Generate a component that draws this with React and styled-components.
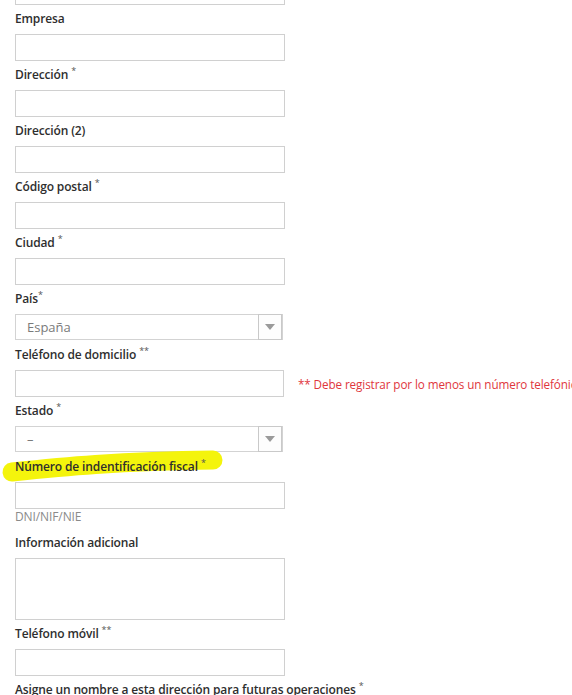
import React from 'react';
import styled, { createGlobalStyle } from 'styled-components';

const GlobalStyle = createGlobalStyle`
  body {
    margin: 0;
    background: #fff;
    font-family: "Open Sans", "Liberation Sans", sans-serif;
    overflow: hidden;
  }
`;

const fields = [
  { label: 'Apellidos', req: '*' },
  { label: 'Empresa' },
  { label: 'Dirección', req: '*' },
  { label: 'Dirección (2)' },
  { label: 'Código postal', req: '*' },
  { label: 'Ciudad', req: '*' },
  { label: 'País', req: '*', tight: true, select: 'España' },
  { label: 'Teléfono de domicilio', req: '**', narrow: true, error: '** Debe registrar por lo menos un número telefónico' },
  { label: 'Estado', req: '*', select: '–' },
  { label: 'Número de indentificación fiscal', req: '*', highlight: true, hint: 'DNI/NIF/NIE' },
  { label: 'Información adicional', textarea: true },
  { label: 'Teléfono móvil', req: '**' },
  { label: 'Asigne un nombre a esta dirección para futuras operaciones', req: '*' },
];

const App = () => (
  <>
    <GlobalStyle />
    <Form>
      {fields.map((f) => (
        <Field key={f.label}>
          <Label>
            {f.highlight && (
              <Marker viewBox="0 0 230 40" width="230" height="40">
                <path d="M12 27 C 60 22, 120 16, 213 15" stroke="#f4f40c" strokeWidth="19" strokeLinecap="round" fill="none" />
              </Marker>
            )}
            <LabelText>
              {f.label}
              {f.req && <Req tight={f.tight}>{f.req}</Req>}
            </LabelText>
          </Label>
          <Row>
            {f.select ? (
              <Select>
                <SelectValue>{f.select}</SelectValue>
                <ArrowBox>
                  <svg width="10" height="6" viewBox="0 0 10 6">
                    <path d="M0 0 H10 L5 6 Z" fill="#9a9a9a" />
                  </svg>
                </ArrowBox>
              </Select>
            ) : f.textarea ? (
              <TextArea />
            ) : (
              <Input narrow={f.narrow} />
            )}
            {f.error && <ErrorText>{f.error}</ErrorText>}
          </Row>
          {f.hint && <Hint>{f.hint}</Hint>}
        </Field>
      ))}
    </Form>
  </>
);

export default App;

const Form = styled.div`
  margin-top: -51px;
  padding-left: 15px;
`;

const Field = styled.div`
  padding-top: 5px;
`;

const Label = styled.div`
  position: relative;
  height: 18px;
  margin-bottom: 6px;
  font-size: 12px;
  line-height: 18px;
  font-weight: 600;
  letter-spacing: -0.14px;
  color: #2e2e2e;
  white-space: nowrap;
`;

const Marker = styled.svg`
  position: absolute;
  left: -15px;
  top: -13px;
  z-index: 0;
`;

const LabelText = styled.span`
  position: relative;
  z-index: 1;
`;

const Req = styled.sup`
  font-size: 9px;
  font-weight: 400;
  color: #555;
  margin-left: ${(p) => (p.tight ? '0' : '3px')};
  vertical-align: 5px;
  line-height: 0;
`;

const Row = styled.div`
  display: flex;
  align-items: center;
  white-space: nowrap;
`;

const Input = styled.div`
  box-sizing: border-box;
  width: ${(p) => (p.narrow ? '269px' : '270px')};
  height: 27px;
  border: 1px solid #d0d0d0;
  flex: none;
`;

const TextArea = styled.div`
  box-sizing: border-box;
  width: 270px;
  height: 62px;
  border: 1px solid #d0d0d0;
`;

const Select = styled.div`
  box-sizing: border-box;
  width: 268px;
  height: 26px;
  margin-bottom: 1px;
  border: 1px solid #d3d3d3;
  display: flex;
  align-items: stretch;
`;

const SelectValue = styled.div`
  flex: 1;
  padding-left: 11px;
  font-size: 13px;
  line-height: 24px;
  color: #7a7a7a;
`;

const ArrowBox = styled.div`
  box-sizing: border-box;
  width: 24px;
  border: 1px solid #c9c9c9;
  margin: -1px 0 -1px 0;
  display: flex;
  align-items: center;
  justify-content: center;
  background: #fdfdfd;
`;

const ErrorText = styled.span`
  margin-left: 14px;
  font-size: 11.7px;
  letter-spacing: -0.1px;
  color: #e0363c;
`;

const Hint = styled.div`
  font-size: 12px;
  line-height: 16px;
  padding-bottom: 4px;
  letter-spacing: -0.1px;
  color: #8a8a8a;
`;
